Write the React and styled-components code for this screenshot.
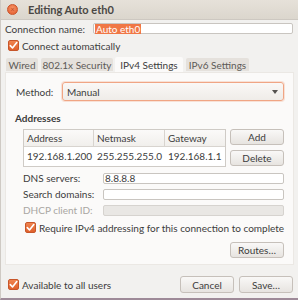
import React from "react";
import styled, { createGlobalStyle } from "styled-components";

const Global = createGlobalStyle`
  html, body { margin: 0; padding: 0; background: #f2f1ef; }
  * { box-sizing: border-box; }
  body { font-family: "Lato", "Liberation Sans", sans-serif; font-size: 10px; color: #3c3c3c; }
`;

const Window = styled.div`
  width: 298px;
  height: 300px;
  background: #f2f1ef;
  border-left: 1px solid #cfcac4;
  border-bottom: 2px solid #9e8a98;
  display: flex;
  flex-direction: column;
  overflow: hidden;
`;

const TitleBar = styled.div`
  height: 20px;
  flex: none;
  display: flex;
  align-items: center;
  padding-left: 6px;
  background: linear-gradient(#e6e1d9, #dbd6cd);
  border-bottom: 1px solid #cdc8c1;
`;

const CloseDot = styled.div`
  width: 11px;
  height: 11px;
  border-radius: 50%;
  background: radial-gradient(circle at 50% 35%, #f79466, #e2582a);
  border: 1px solid #c9542a;
  display: flex;
  align-items: center;
  justify-content: center;
  color: #b9461f;
  font-size: 7px;
  line-height: 1;
`;

const Title = styled.div`
  margin-left: 10px;
  font-weight: bold;
  font-size: 11px;
  color: #4a4744;
`;

const Body = styled.div`
  flex: 1;
  display: flex;
  flex-direction: column;
  padding: 0 5px 0 4px;
`;

const Row = styled.div`
  display: flex;
  align-items: center;
  height: ${(p) => p.$h || 17}px;
  padding-left: ${(p) => p.$pl || 0}px;
  margin-top: ${(p) => p.$mt || 0}px;
  color: ${(p) => (p.$muted ? "#a9a6a2" : "#3c3c3c")};
  white-space: nowrap;
`;

const Label = styled.div`
  width: ${(p) => p.$w}px;
  flex: none;
  white-space: nowrap;
`;

const Input = styled.div`
  flex: 1;
  height: 11px;
  display: flex;
  align-items: center;
  background: ${(p) => (p.$disabled ? "#e9e7e4" : "#ffffff")};
  border: 1px solid ${(p) => (p.$disabled ? "#d6d3cf" : "#c9c5c0")};
  border-radius: 2px;
  padding-left: 1px;
  white-space: nowrap;
`;

const Selected = styled.span`
  background: #f07746;
  color: #fff;
  padding: 0 1px;
  line-height: 10px;
`;

const Check = styled.div`
  width: 11px;
  height: 11px;
  flex: none;
  border-radius: 2px;
  background: linear-gradient(#f0844f, #e0602c);
  border: 1px solid #c7562a;
  display: flex;
  align-items: center;
  justify-content: center;
  margin-right: 3px;
`;

const CheckMark = () => (
  <svg width="9" height="9" viewBox="0 0 9 9">
    <path d="M1.3 4.6 L3.5 7 L7.8 1.6" fill="none" stroke="#fff" strokeWidth="1.6" strokeLinecap="round" strokeLinejoin="round" />
  </svg>
);

const Checkbox = ({ children }) => (
  <>
    <Check>
      <CheckMark />
    </Check>
    <span>{children}</span>
  </>
);

const TabBar = styled.div`
  display: flex;
  align-items: flex-end;
  height: 15px;
  margin-top: 3px;
  padding-left: 1px;
`;

const Tab = styled.div`
  width: ${(p) => p.$w}px;
  margin-right: ${(p) => p.$gap}px;
  height: ${(p) => (p.$active ? 15 : 13)}px;
  display: flex;
  align-items: center;
  justify-content: center;
  background: ${(p) => (p.$active ? "#fbfaf9" : "#e5e1dc")};
  color: ${(p) => (p.$active ? "#3c3c3c" : "#5d5a57")};
  border-radius: 2px 2px 0 0;
  margin-bottom: ${(p) => (p.$active ? 0 : 1)}px;
  white-space: nowrap;
`;

const Page = styled.div`
  height: 193px;
  width: 289px;
  background: #fbfaf9;
  border: 1px solid #ebe8e4;
  display: flex;
  flex-direction: column;
  padding: 9px 9px 0 9px;
`;

const Combo = styled.div`
  flex: 1;
  height: 19px;
  display: flex;
  align-items: center;
  justify-content: space-between;
  padding: 0 5px 0 4px;
  border: 1px solid #f0a584;
  border-radius: 3px;
  background: linear-gradient(#faf8f6, #efece8);
  box-shadow: 0 0 0 1px rgba(240, 150, 110, 0.25);
`;

const Arrow = styled.div`
  width: 0;
  height: 0;
  border-left: 3px solid transparent;
  border-right: 3px solid transparent;
  border-top: 4px solid #55524f;
`;

const Heading = styled.div`
  font-weight: bold;
  height: 16px;
  display: flex;
  align-items: center;
  margin-top: 9px;
`;

const AddrArea = styled.div`
  display: flex;
  margin-top: 3px;
  padding-left: 8px;
`;

const Table = styled.div`
  width: 205px;
  height: 38px;
  background: #fff;
  border: 1px solid #cfcbc6;
`;

const TableRow = styled.div`
  display: grid;
  grid-template-columns: 70px 71px 1fr;
  height: ${(p) => p.$h}px;
  align-items: center;
  border-bottom: ${(p) => (p.$head ? "1px solid #d8d4cf" : "none")};
  background: ${(p) => (p.$head ? "linear-gradient(#fbfaf9, #f1efec)" : "#fff")};
`;

const Cell = styled.div`
  padding-left: 3px;
  height: 100%;
  display: flex;
  align-items: center;
  white-space: nowrap;
  border-right: ${(p) => (p.$head && !p.$last ? "1px solid #d8d4cf" : "none")};
`;

const SideButtons = styled.div`
  display: flex;
  flex-direction: column;
  gap: 5px;
  margin-left: 4px;
`;

const Button = styled.div`
  width: ${(p) => p.$w || 54}px;
  height: ${(p) => p.$h || 16}px;
  display: flex;
  align-items: center;
  justify-content: center;
  border: 1px solid #c6c0ba;
  border-radius: 3px;
  background: linear-gradient(#f9f8f7, #e7e4e0);
  color: #3c3c3c;
  white-space: nowrap;
`;

const Field = styled(Row)`
  padding-left: 8px;
  padding-right: 0;
`;

const RoutesRow = styled.div`
  display: flex;
  justify-content: flex-end;
  margin-top: 6px;
`;

const Footer = styled.div`
  flex: 1;
  display: flex;
  align-items: center;
  justify-content: space-between;
  padding: 6px 0 0 3px;
`;

const FooterButtons = styled.div`
  display: flex;
  gap: 5px;
`;

export default function App() {
  return (
    <>
      <Global />
      <Window>
        <TitleBar>
          <CloseDot>×</CloseDot>
          <Title>Editing Auto eth0</Title>
        </TitleBar>
        <Body>
          <Row $h={17}>
            <Label $w={88}>Connection name:</Label>
            <Input>
              <Selected>Auto eth0</Selected>
            </Input>
          </Row>
          <Row $h={17} $pl={3}>
            <Checkbox>Connect automatically</Checkbox>
          </Row>
          <TabBar>
            <Tab $w={32} $gap={3}>Wired</Tab>
            <Tab $w={72} $gap={2}>802.1x Security</Tab>
            <Tab $w={68} $gap={3} $active>IPv4 Settings</Tab>
            <Tab $w={63} $gap={0}>IPv6 Settings</Tab>
          </TabBar>
          <Page>
            <Row $h={19} $pl={1}>
              <Label $w={46}>Method:</Label>
              <Combo>
                <span>Manual</span>
                <Arrow />
              </Combo>
            </Row>
            <Heading>Addresses</Heading>
            <AddrArea>
              <Table>
                <TableRow $head $h={17}>
                  <Cell $head>Address</Cell>
                  <Cell $head>Netmask</Cell>
                  <Cell $head $last>Gateway</Cell>
                </TableRow>
                <TableRow $h={18}>
                  <Cell>192.168.1.200</Cell>
                  <Cell>255.255.255.0</Cell>
                  <Cell>192.168.1.1</Cell>
                </TableRow>
              </Table>
              <SideButtons>
                <Button>Add</Button>
                <Button>Delete</Button>
              </SideButtons>
            </AddrArea>
            <Field $h={16} $mt={3}>
              <Label $w={80}>DNS servers:</Label>
              <Input>8.8.8.8</Input>
            </Field>
            <Field $h={16}>
              <Label $w={80}>Search domains:</Label>
              <Input />
            </Field>
            <Field $h={16} $muted>
              <Label $w={80}>DHCP client ID:</Label>
              <Input $disabled />
            </Field>
            <Row $h={17} $pl={10} $mt={1}>
              <Checkbox>Require IPv4 addressing for this connection to complete</Checkbox>
            </Row>
            <RoutesRow>
              <Button>Routes…</Button>
            </RoutesRow>
          </Page>
          <Footer>
            <Row $h={17}>
              <Checkbox>Available to all users</Checkbox>
            </Row>
            <FooterButtons>
              <Button $h={17}>Cancel</Button>
              <Button $h={17}>Save…</Button>
            </FooterButtons>
          </Footer>
        </Body>
      </Window>
    </>
  );
}
